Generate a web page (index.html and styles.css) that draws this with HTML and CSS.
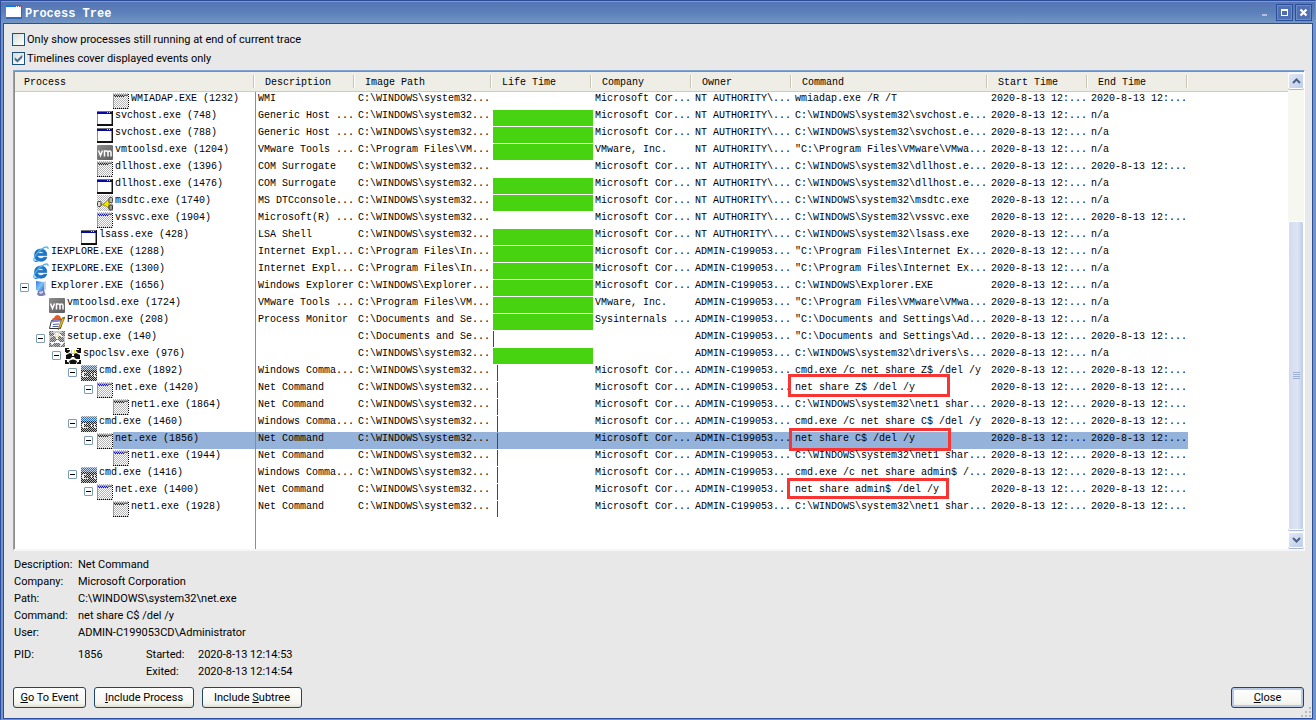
FILE: index.html
```html
<!DOCTYPE html>
<html lang="en">
<head>
<meta charset="utf-8">
<title>Process Tree</title>
<link rel="stylesheet" href="styles.css">
</head>
<body>
<svg class="sprites" aria-hidden="true">
  <defs>
    <pattern id="dither" width="2" height="2" patternUnits="userSpaceOnUse"><path d="M0 0h1v1H0zM1 1h1v1H1z" fill="#fff"/></pattern>
    <pattern id="dither-grey" width="2" height="2" patternUnits="userSpaceOnUse"><rect width="2" height="2" fill="#fff"/><path d="M0 0h1v1H0zM1 1h1v1H1z" fill="#b4b4b4"/></pattern>
    <linearGradient id="steel" x1="0" y1="0" x2="1" y2="1"><stop offset="0" stop-color="#8c8c8c"/><stop offset="1" stop-color="#5c5c5c"/></linearGradient>
    <linearGradient id="screen" x1="0" y1="0" x2="1" y2="1"><stop offset="0" stop-color="#2a7be0"/><stop offset=".5" stop-color="#7cc4f8"/><stop offset="1" stop-color="#2463c8"/></linearGradient>
  </defs>
  <symbol id="i-app" viewBox="0 0 16 16" shape-rendering="crispEdges">
    <path d="M0 1h16v15H0z" fill="#111"/><path d="M0 1h15v13H0z" fill="#8b8b8b"/><path d="M1 2h13v12H1z" fill="#fff"/>
    <path d="M0 1h15v3H0z" fill="#0808a8"/><path d="M0 1h15v1H0z" fill="#777"/><path d="M10 2h1v1h-1zM12 2h1v1h-1z" fill="#ddd"/><path d="M13 2h1v1h-1z" fill="#111"/>
  </symbol>
  <symbol id="i-ghost" viewBox="0 0 16 16" shape-rendering="crispEdges">
    <path d="M0 0h16v16H0z" fill="url(#dither-grey)"/><path d="M0 1h1v14H0z" fill="#999"/>
    <path d="M1 2h1v1H1zM3 2h1v1H3zM5 2h1v1H5zM7 2h1v1H7zM9 2h1v1H9zM2 3h1v1H2zM4 3h1v1H4zM6 3h1v1H6zM8 3h1v1H8zM10 3h1v1h-1z" fill="#1616ad"/>
    <path d="M1 1h14v1H1z" fill="#aaa"/><path d="M11 2h4v1h-4z" fill="#666"/>
    <path d="M15.5 1v14M0 15.5h16" stroke="#000" stroke-dasharray="1 1"/>
  </symbol>
  <symbol id="i-vm" viewBox="0 0 16 16">
    <rect y="1" width="16" height="15" rx="1" fill="url(#steel)"/>
    <path d="M1.500 6.500 3.500 11.500 5.500 6.500M7.500 12.500V7h2q1.500 0 1.500 1.500v4M11 8.500Q11 7 12.500 7T14 8.500v4" fill="none" stroke="#fff" stroke-width="1.500"/>
  </symbol>
  <symbol id="i-msdtc" viewBox="0 0 16 16">
    <path d="M0 0h16v16H0z" fill="url(#dither-grey)"/>
    <path d="M3 9h4l5-5v9L7 10H3z" fill="#f0e800" stroke="#857d00" stroke-width=".7"/>
    <rect x=".5" y="6.500" width="3.500" height="5" rx="1" fill="#ddd" stroke="#444"/><rect x="12" y="2.500" width="3.500" height="5" rx="1" fill="#bbb" stroke="#444"/><rect x="12" y="10" width="3.500" height="5" rx="1" fill="#999" stroke="#333"/>
  </symbol>
  <symbol id="i-ie" viewBox="0 0 16 16">
    <path d="M13.800 9.600H4.300Q4.500 12.400 8 12.400q2 0 2.900-1.100h3Q12.500 15.300 8 15.300 1.500 15.200 1.500 9.300 1.700 3 8 3q6 .2 5.800 6.600zM4.500 7.500h6.300Q10.400 5.700 8 5.600q-2.700.1-3.500 1.900z" fill="#1678cf" stroke="#1157a6" stroke-width=".6"/>
    <path d="M1.800 15.300Q-.6 14.500 2.700 9 6 4 11 1.700 15.500-.2 15 3.200" fill="none" stroke="#54b4ed" stroke-width="1.300"/>
    <path d="M2 15.400Q4 15.500 6 14" fill="none" stroke="#2a83cf" stroke-width="1.400"/>
  </symbol>
  <symbol id="i-explorer" viewBox="0 0 16 16">
    <path d="m3 1 8 1v8l-2 2-6-2z" fill="url(#screen)"/><path d="m11 2 2-1v8l-2 2z" fill="#c2cde8"/>
    <path d="m5 11 6-1 1 3 .5 2-3 1H6l-2-1.500z" fill="#7b80b2"/><path d="m6 12 4-1v2l-3 1z" fill="#d2d5ed"/>
  </symbol>
  <symbol id="i-procmon" viewBox="0 0 16 16">
    <path d="M3 6q0-2 2-2 1-3 4-3 3 1 3 4z" fill="#e55a25"/><path d="m2.500 6.500 11-1-2 9H.5z" fill="#fff" stroke="#34343f"/>
    <path d="m3 6.500 10-1-.5 2L2 8.500z" fill="#7e8ad0"/><path d="m4 10.500 6-.5M3.500 12.500h6" stroke="#4c5c95"/><path d="m13 4 3-1-4 10-3 3 1-3z" fill="#e4b81a" stroke="#68520b" stroke-width=".6"/>
    <path d="m13 4 3-1-1 2z" fill="#2a8c37"/>
  </symbol>
  <symbol id="i-panda" viewBox="0 0 16 16">
    <path d="M0 0h4v1H2v1H1v2H0zM12 0h4v5h-1V2h-1V1h-2zM0 12h2v2h2v2H0zM16 12h-2v2h-2v2h4z" fill="#111"/>
    <path d="M1 2h4v3H1zM11 2h4v3h-4z" fill="#111"/>
    <path d="M5 3q3-2 6 0l3 3 1 5-3 4H4l-3-4 1-5z" fill="#fff"/>
    <path d="m1 7 4-2 2 1v3l-2 2H1zM15 7l-4-2-2 1v3l2 2h4z" fill="#111"/>
    <path d="M6 2h1v4H6zM9 2h1v4H9zM7 5h2v1H7z" fill="#e8d61c"/>
    <path d="M6 8h4v1H6zM4 13q4-3 8 0l-1 3H5z" fill="#111"/>
  </symbol>
  <symbol id="i-setup" viewBox="0 0 16 16" shape-rendering="crispEdges">
    <path d="M0 0h16v16H0z" fill="#999"/><use href="#i-panda"/><path d="M0 0h16v16H0z" fill="url(#dither-grey)" opacity=".35"/><path d="M0 0h16v16H0z" fill="url(#dither)" opacity=".6"/>
  </symbol>
  <symbol id="i-cmd" viewBox="0 0 16 16" shape-rendering="crispEdges">
    <path d="M0 0h16v16H0z" fill="#222"/><path d="M0 0h16v1H0z" fill="#999"/><path d="M0 1h16v4H0z" fill="#2e74bd"/><path d="M0 0h16v16H0z" fill="url(#dither)" opacity=".7"/>
    <path d="M2 7h3v1H3v3h2v1H2l-1-1V8zM6 8h1v1H6zM6 11h1v1H6zM9 7h1l2 5h-1zM13 8h2v1h-1v2h1v1h-2z" fill="#f4f4f4"/>
  </symbol>
</svg>

<main class="window">
  <header class="titlebar">
    <svg class="titlebar-icon" viewBox="0 0 16 14" aria-hidden="true" shape-rendering="crispEdges"><path d="M0 0h16v14H0z" fill="#3867b8"/><path d="M0 0h16v3H0z" fill="#1179dc"/><path d="M10 1h1v1h-1zM12 1h1v1h-1z" fill="#fff"/><path d="M14 1h1v1h-1z" fill="#e77"/><path d="M0 2h15v10H0z" fill="#fff"/></svg>
    <h1>Process Tree</h1>
    <button class="caption minimize" aria-label="Minimize"><svg viewBox="0 0 13 13" shape-rendering="crispEdges"><path d="M3 8h5v2H3z" fill="#b4bfe0"/></svg></button>
    <button class="caption" aria-label="Maximize"><svg viewBox="0 0 13 13" shape-rendering="crispEdges"><path d="M3 3h7v7H3zM4 5v4h5V5z" fill="#fff" fill-rule="evenodd"/></svg></button>
    <button class="caption" aria-label="Close window"><svg viewBox="0 0 13 13"><path d="m3.500 3.500 6 6m0-6-6 6" stroke="#fff" stroke-width="2.200"/></svg></button>
  </header>

  <div class="content">
    <div class="options">
      <label><input type="checkbox">Only show processes still running at end of current trace</label>
      <label><input type="checkbox" checked>Timelines cover displayed events only</label>
    </div>

    <section class="list">
      <div class="viewport">
        <table>
          <colgroup><col class="w-process"><col class="w-std"><col class="w-path"><col class="w-std"><col class="w-std"><col class="w-std"><col class="w-command"><col class="w-std"><col class="w-std"><col></colgroup>
          <thead><tr><th>Process</th><th>Description</th><th>Image Path</th><th>Life Time</th><th>Company</th><th>Owner</th><th>Command</th><th>Start Time</th><th>End Time</th><td class="filler"></td></tr></thead>
          <tbody id="rows"></tbody>
        </table>
      </div>
      <div class="scrollbar">
        <button class="scroll-button" aria-label="Scroll up"><svg viewBox="0 0 9 6"><path d="m1 5 3.500-3.500L8 5" fill="none" stroke="#4d6185" stroke-width="2"/></svg></button>
        <div class="track"><div class="thumb"><i></i><i></i><i></i><i></i></div></div>
        <button class="scroll-button" aria-label="Scroll down"><svg viewBox="0 0 9 6"><path d="m1 1 3.500 3.500L8 1" fill="none" stroke="#4d6185" stroke-width="2"/></svg></button>
      </div>
    </section>

    <dl class="details">
      <dt>Description:</dt><dd>Net Command</dd>
      <dt>Company:</dt><dd>Microsoft Corporation</dd>
      <dt>Path:</dt><dd>C:\WINDOWS\system32\net.exe</dd>
      <dt>Command:</dt><dd>net share C$ /del /y</dd>
      <dt>User:</dt><dd>ADMIN-C199053CD\Administrator</dd>
    </dl>
    <dl class="times">
      <dt>PID:</dt><dd>1856</dd><dt>Started:</dt><dd>2020-8-13 12:14:53</dd>
      <dt class="exited">Exited:</dt><dd>2020-8-13 12:14:54</dd>
    </dl>

    <footer class="actions">
      <button class="push"><u>G</u>o To Event</button>
      <button class="push wide"><u>I</u>nclude Process</button>
      <button class="push wide">Include <u>S</u>ubtree</button>
      <button class="push default"><u>C</u>lose</button>
    </footer>
    <svg class="grip" viewBox="0 0 12 12" aria-hidden="true" shape-rendering="crispEdges"><path d="M9 1h2v2H9zM5 5h2v2H5zM9 5h2v2H9zM1 9h2v2H1zM5 9h2v2H5zM9 9h2v2H9z" fill="#bcbcb4"/></svg>
  </div>
</main>
<script src="rows.js"></script>
</body>
</html>
```

FILE: styles.css
```css
* { box-sizing: border-box; }

:root {
  --ui: Roboto, "Open Sans", sans-serif;
  --mono: "Liberation Mono", monospace;
  --frame: #2c4c9c;
}

body {
  margin: 0;
  font: 11px/17px var(--ui);
  color: #000;
}

button, input { margin: 0; padding: 0; font: inherit; color: inherit; }

.sprites { position: absolute; width: 0; height: 0; }

.window {
  display: flex;
  flex-direction: column;
  min-height: 100vh;
  border: 1px solid var(--frame);
  border-right-color: #6f93c6;
  border-bottom-color: #6f93c6;
  background: #7396c8;
}

.titlebar {
  display: flex;
  align-items: center;
  gap: 2px;
  height: 22px;
  padding: 0 3px 0 5px;
  border-top: 1px solid #7c9cd0;
  background: linear-gradient(#5575b4, #5c80b9 50%, #7396c5);
}
.titlebar-icon { width: 16px; height: 14px; margin-bottom: 2px; }
.titlebar h1 {
  flex: 1;
  margin: 0 0 0 1px;
  padding-top: 2px;
  color: #fff;
  font: bold 12px/20px var(--mono);
}
.caption {
  width: 17px;
  height: 17px;
  border: 1px solid var(--frame);
  outline: 1px solid #6b8cc4;
  outline-offset: -2px;
  background: #4f70b2;
}
.caption.minimize { border-color: transparent; outline: 0; background: none; }
.caption svg { display: block; width: 13px; height: 13px; margin: 1px; }

.content {
  position: relative;
  display: flex;
  flex: 1;
  flex-direction: column;
  margin: 0 2px;
  padding: 6px 7px 10px 8px;
  border: 1px solid var(--frame);
  background: #e8e8e8;
}

.options { display: grid; padding-bottom: 2px; }
.options label { display: flex; align-items: center; gap: 2px; width: max-content; height: 19px; }
.options input {
  appearance: none;
  display: grid;
  place-items: center;
  width: 13px;
  height: 13px;
  border: 1px solid #1c5180;
  background: linear-gradient(135deg, #dcdcd7, #fff);
}
.options input:checked::before {
  content: "";
  width: 9px;
  height: 9px;
  background: #4a7096;
  clip-path: polygon(8% 36%, 38% 60%, 92% 8%, 92% 42%, 38% 95%, 8% 68%);
}

.list {
  display: flex;
  flex: 1;
  margin-left: 1px;
  border: 1px solid #7ea4d3;
  border-right: 1px solid #fff;
  border-bottom: 2px solid #f6f6f6;
  background: #fff;
  box-shadow: inset 1px 1px #8c8c8c;
  padding: 1px 0 0 1px;
}
.viewport { position: relative; flex: 1; min-width: 0; overflow: hidden; }
.viewport::after {
  content: "";
  position: absolute;
  left: 240px;
  top: 20px;
  bottom: 0;
  width: 1px;
  background: #8c8c8c;
}

table { width: 100%; border-collapse: separate; border-spacing: 0; table-layout: fixed; font: 10px/13px var(--mono); }
.w-process { width: 240px; }
.w-std { width: 100px; }
.w-path { width: 137px; }
.w-command { width: 196px; }

th, .filler { height: 20px; padding: 2px 0 0 10px; border-bottom: 1px solid #cfccbd; background: #efeee6; }
th {
  background: linear-gradient(90deg, #c9c6b7 1px, #fff 1px) right center / 2px 13px no-repeat #efeee6;
  font-weight: normal;
  text-align: left;
}
th:first-child { padding-left: 9px; }
tbody td { height: 17px; padding: 0 0 0 3px; vertical-align: top; white-space: nowrap; }
tbody td:nth-child(1) { padding: 0; }
tbody td:nth-child(4) { padding: 1px 0 0 1px; }
.selected td:not(:first-child):not(:last-child), .selected .name { background: #95b3da; }

.node { display: flex; height: 17px; padding-left: calc(5px + 16px * var(--depth)); }
.slot { width: 13px; padding-top: 4px; }
.toggle {
  display: block;
  width: 9px;
  height: 9px;
  border: 1px solid #7f9cb8;
  border-radius: 1px;
  background: linear-gradient(#000, #000) center / 5px 1px no-repeat #fff;
}
.node svg { width: 16px; height: 16px; margin-top: 1px; }
.name { flex: 1; padding-left: 2px; }

.life { height: 16px; margin-right: -1px; background: #47d30f; }
.life.short { width: 1px; background: #0a730a; }
.life.later { margin-left: 4px; }

.command { position: relative; }
.mark { position: absolute; width: 162px; height: 23px; border: 3px solid #f93534; }
.mark-z { left: -4px; top: -7px; }
.mark-c { left: -3px; top: -4px; }
.mark-admin { left: -5px; top: -5px; height: 21px; }

.scrollbar { display: flex; flex-direction: column; width: 16px; padding: 1px 0; background: #f7f7f2; }
.scroll-button {
  display: grid;
  place-items: center;
  width: 16px;
  height: 16px;
  border: 1px solid #fff;
  border-radius: 2px;
  background: linear-gradient(135deg, #e0e7f6, #bfcde9);
  box-shadow: 0 1px #a8bad6;
}
.scroll-button svg { width: 9px; height: 6px; }
.track { display: flex; flex: 1; flex-direction: column; justify-content: flex-end; padding-bottom: 2px; }
.thumb {
  display: flex;
  flex-direction: column;
  align-items: center;
  justify-content: center;
  gap: 1px;
  width: 16px;
  height: 70%;
  border: 1px solid #fff;
  border-radius: 2px;
  background: linear-gradient(90deg, #d3dcef, #dde4f4 60%, #bfcce6);
  box-shadow: 0 1px #a8bad6;
}
.thumb i { width: 7px; height: 1px; background: #9fb0d2; }

.details, .times { display: grid; margin: 0; padding-left: 2px; }
.details { grid-template-columns: 64px 1fr; padding-top: 5px; }
.times { grid-template-columns: 64px 68px 52px 1fr; padding-top: 5px; }
.exited { grid-column: 3; }
dd { margin: 0; }

.actions { display: flex; gap: 8px; padding: 7px 1px 0; }
.push {
  width: 73px;
  height: 21px;
  border: 1px solid #1f4568;
  border-radius: 3px;
  background: linear-gradient(#fff, #f5f5f0 80%, #e1ded3);
  line-height: 19px;
}
.push.wide { width: 100px; }
.push.default { margin-left: auto; box-shadow: inset 0 0 0 2px #b9c9e6; }
.grip { position: absolute; right: 0; bottom: 0; width: 12px; height: 12px; }
```

FILE: rows.js
```js
const SYS = "C:\\WINDOWS\\system32...";
const PROG = "C:\\Program Files\\";
const DOCS = "C:\\Documents and Se...";
const MS = "Microsoft Cor...";
const NT = "NT AUTHORITY\\...";
const ADMIN = "ADMIN-C199053...";
const TIME = "2020-8-13 12:...";
const NA = "n/a";

// depth, expandable, icon, name, description, path, life, company, owner, command, end, mark
const rows = [
  [5, 0, "ghost", "WMIADAP.EXE (1232)", "WMI", SYS, "", MS, NT, "wmiadap.exe /R /T", TIME],
  [4, 0, "app", "svchost.exe (748)", "Generic Host ...", SYS, "full", MS, NT, "C:\\WINDOWS\\system32\\svchost.e...", NA],
  [4, 0, "app", "svchost.exe (788)", "Generic Host ...", SYS, "full", MS, NT, "C:\\WINDOWS\\system32\\svchost.e...", NA],
  [4, 0, "vm", "vmtoolsd.exe (1204)", "VMware Tools ...", PROG + "VM...", "full", "VMware, Inc.", NT, "\"C:\\Program Files\\VMware\\VMwa...", NA],
  [4, 0, "ghost", "dllhost.exe (1396)", "COM Surrogate", SYS, "", MS, NT, "C:\\WINDOWS\\system32\\dllhost.e...", TIME],
  [4, 0, "app", "dllhost.exe (1476)", "COM Surrogate", SYS, "full", MS, NT, "C:\\WINDOWS\\system32\\dllhost.e...", NA],
  [4, 0, "msdtc", "msdtc.exe (1740)", "MS DTCconsole...", SYS, "full", MS, NT, "C:\\WINDOWS\\system32\\msdtc.exe", NA],
  [4, 0, "ghost", "vssvc.exe (1904)", "Microsoft(R) ...", SYS, "", MS, NT, "C:\\WINDOWS\\System32\\vssvc.exe", TIME],
  [3, 0, "app", "lsass.exe (428)", "LSA Shell", SYS, "full", MS, NT, "C:\\WINDOWS\\system32\\lsass.exe", NA],
  [0, 0, "ie", "IEXPLORE.EXE (1288)", "Internet Expl...", PROG + "In...", "full", MS, ADMIN, "\"C:\\Program Files\\Internet Ex...", NA],
  [0, 0, "ie", "IEXPLORE.EXE (1300)", "Internet Expl...", PROG + "In...", "full", MS, ADMIN, "\"C:\\Program Files\\Internet Ex...", NA],
  [0, 1, "explorer", "Explorer.EXE (1656)", "Windows Explorer", "C:\\WINDOWS\\Explorer...", "full", MS, ADMIN, "C:\\WINDOWS\\Explorer.EXE", NA],
  [1, 0, "vm", "vmtoolsd.exe (1724)", "VMware Tools ...", PROG + "VM...", "full", "VMware, Inc.", ADMIN, "\"C:\\Program Files\\VMware\\VMwa...", NA],
  [1, 0, "procmon", "Procmon.exe (208)", "Process Monitor", DOCS, "full", "Sysinternals ...", ADMIN, "\"C:\\Documents and Settings\\Ad...", NA],
  [1, 1, "setup", "setup.exe (140)", "", DOCS, "short", "", ADMIN, "\"C:\\Documents and Settings\\Ad...", TIME],
  [2, 1, "panda", "spoclsv.exe (976)", "", SYS, "full", "", ADMIN, "C:\\WINDOWS\\system32\\drivers\\s...", NA],
  [3, 1, "cmd", "cmd.exe (1892)", "Windows Comma...", SYS, "short later", MS, ADMIN, "cmd.exe /c net share Z$ /del /y", TIME],
  [4, 1, "ghost", "net.exe (1420)", "Net Command", SYS, "short later", MS, ADMIN, "net share Z$ /del /y", TIME, "z"],
  [5, 0, "ghost", "net1.exe (1864)", "Net Command", SYS, "short later", MS, ADMIN, "C:\\WINDOWS\\system32\\net1 shar...", TIME],
  [3, 1, "cmd", "cmd.exe (1460)", "Windows Comma...", SYS, "short later", MS, ADMIN, "cmd.exe /c net share C$ /del /y", TIME],
  [4, 1, "ghost", "net.exe (1856)", "Net Command", SYS, "short later", MS, ADMIN, "net share C$ /del /y", TIME, "c"],
  [5, 0, "ghost", "net1.exe (1944)", "Net Command", SYS, "short later", MS, ADMIN, "C:\\WINDOWS\\system32\\net1 shar...", TIME],
  [3, 1, "cmd", "cmd.exe (1416)", "Windows Comma...", SYS, "short later", MS, ADMIN, "cmd.exe /c net share admin$ /...", TIME],
  [4, 1, "ghost", "net.exe (1400)", "Net Command", SYS, "short later", MS, ADMIN, "net share admin$ /del /y", TIME, "admin"],
  [5, 0, "ghost", "net1.exe (1928)", "Net Command", SYS, "short later", MS, ADMIN, "C:\\WINDOWS\\system32\\net1 shar...", TIME]
];

document.getElementById("rows").innerHTML = rows.map(
  ([depth, open, icon, name, desc, path, life, company, owner, command, end, mark]) => `
  <tr${mark === "c" ? ' class="selected"' : ""}>
    <td><div class="node" style="--depth:${depth}">
      <span class="slot">${open ? `<button class="toggle" aria-label="Collapse ${name}"></button>` : ""}</span>
      <svg aria-hidden="true"><use href="#i-${icon}"/></svg><span class="name">${name}</span></div></td>
    <td>${desc}</td><td>${path}</td>
    <td>${life ? `<div class="life ${life}"></div>` : ""}</td>
    <td>${company}</td><td>${owner}</td>
    <td class="command">${command}${mark ? `<span class="mark mark-${mark}"></span>` : ""}</td>
    <td>${TIME}</td><td>${end}</td><td></td>
  </tr>`).join("");
```
